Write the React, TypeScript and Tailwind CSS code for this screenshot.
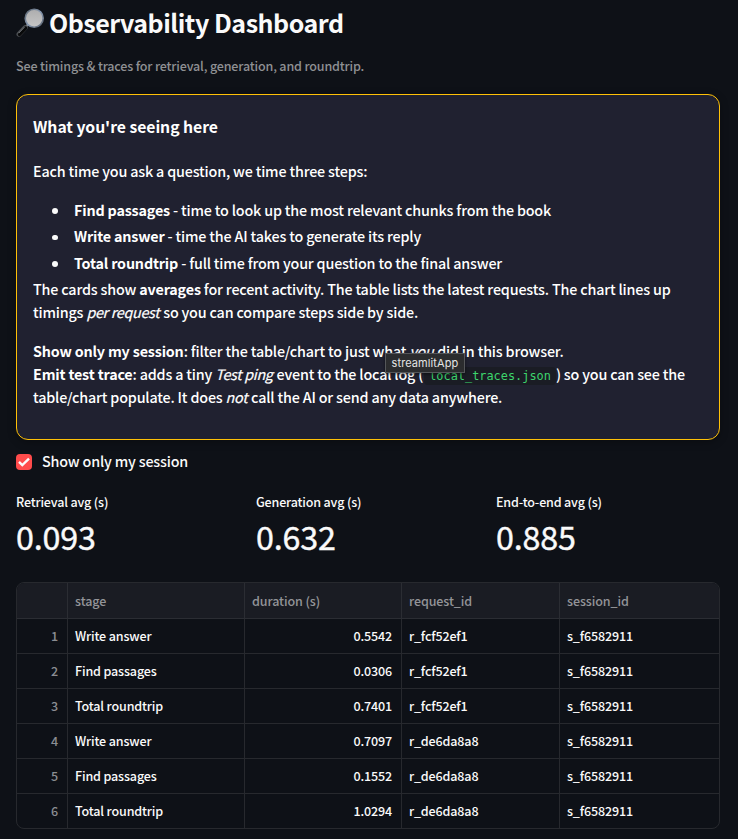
import type { ReactNode } from "react";

const metrics = [
  { label: "Retrieval avg (s)", value: "0.093" },
  { label: "Generation avg (s)", value: "0.632" },
  { label: "End-to-end avg (s)", value: "0.885" },
];

const rows = [
  ["Write answer", "0.5542", "r_fcf52ef1", "s_f6582911"],
  ["Find passages", "0.0306", "r_fcf52ef1", "s_f6582911"],
  ["Total roundtrip", "0.7401", "r_fcf52ef1", "s_f6582911"],
  ["Write answer", "0.7097", "r_de6da8a8", "s_f6582911"],
  ["Find passages", "0.1552", "r_de6da8a8", "s_f6582911"],
  ["Total roundtrip", "1.0294", "r_de6da8a8", "s_f6582911"],
];

function MagnifierIcon() {
  return (
    <svg width="30" height="30" viewBox="0 0 30 30" className="mt-[2px] shrink-0">
      <defs>
        <linearGradient id="rim" x1="0" y1="0" x2="1" y2="1">
          <stop offset="0" stopColor="#58616b" />
          <stop offset="0.5" stopColor="#8799b2" />
          <stop offset="1" stopColor="#59616c" />
        </linearGradient>
        <linearGradient id="glass" x1="0" y1="0" x2="0" y2="1">
          <stop offset="0" stopColor="#adadae" />
          <stop offset="1" stopColor="#c6c6c6" />
        </linearGradient>
      </defs>
      <path d="M12 16.5 9 19.5" stroke="#8b8f94" strokeWidth="2.2" />
      <path d="M9.3 19.6 3 26.2" stroke="#4b4e52" strokeWidth="5" strokeLinecap="round" />
      <path d="M9.6 20 3.6 26.4" stroke="#08090a" strokeWidth="3.4" strokeLinecap="round" />
      <path d="M8.2 19.4 3 24.8" stroke="#85898d" strokeWidth="0.9" strokeLinecap="round" />
      <circle cx="18.2" cy="10.2" r="9" fill="url(#glass)" stroke="url(#rim)" strokeWidth="1.6" />
    </svg>
  );
}

function Em({ children }: { children: ReactNode }) {
  return <i className="mr-[0.8px] font-normal tracking-[-0.3px] [-webkit-text-stroke:0.2px]">{children}</i>;
}

function Bullet({ title, children }: { title: string; children: ReactNode }) {
  return (
    <li className="flex h-[26.5px] items-center">
      <span className="mt-[3px] mr-[16.5px] ml-[19px] size-[5.5px] rounded-full bg-[#fafafa]" />
      <span>
        <b>{title}</b> {children}
      </span>
    </li>
  );
}

export default function App() {
  return (
    <main className="h-[839px] w-[738px] overflow-hidden bg-[#0e1117] pr-[18px] pl-4 font-['Noto_Sans_CJK_SC',sans-serif] text-[14.33px] font-medium tracking-[-0.175px] whitespace-nowrap text-[#fafafa]">
      <header className="flex h-11 items-center gap-[3px]">
        <MagnifierIcon />
        <h1 className="text-[25px] leading-[44px] font-bold tracking-[-0.48px]">Observability Dashboard</h1>
      </header>
      <p className="mt-[10px] h-10 text-[12.54px] leading-6 tracking-[-0.165px] text-[#8f9093]">
        See timings &amp; traces for retrieval, generation, and roundtrip.
      </p>

      <section className="h-[346px] rounded-xl border border-[#ffc107] bg-[#202130] px-4 pt-[20px] leading-[23px] text-white shadow-[0_2px_8px_rgba(0,0,0,0.3)]">
        <h2 className="text-[15.76px] leading-6 font-bold tracking-[-0.05px]">What you're seeing here</h2>
        <p className="mt-5">Each time you ask a question, we time three steps:</p>
        <ul className="mt-[14px]">
          <Bullet title="Find passages">- time to look up the most relevant chunks from the book</Bullet>
          <Bullet title="Write answer">- time the AI takes to generate its reply</Bullet>
          <Bullet title="Total roundtrip">- full time from your question to the final answer</Bullet>
        </ul>
        <p className="mt-[1px]">
          The cards show <b>averages</b> for recent activity. The table lists the latest requests. The chart lines up
          <br />
          timings <Em>per request</Em> so you can compare steps side by side.
        </p>
        <p className="relative mt-4">
          <b>Show only my session</b>: filter the table/chart to just what <Em>you</Em> did in this browser.
          <br />
          <b>Emit test trace</b>: adds a tiny <Em>Test ping</Em> event to the local log (
          <code className="ml-[1px] rounded bg-[#1a1c24] px-[5px] py-[2px] font-['DejaVu_Sans_Mono',monospace] text-[11.9px] leading-none tracking-normal text-[#3dd56d]">
            local_traces.json
          </code>
          ) so you can see the
          <br />
          table/chart populate. It does <Em>not</Em> call the AI or send any data anywhere.
          <span className="absolute top-[14px] left-[352px] h-[20px] w-[80px] border border-[#55575a] bg-[#2b2c2e] text-center font-[Inter,sans-serif] text-[11px] leading-[18px] font-normal tracking-[0.1px] text-[#e4e4e4] shadow-[0_1px_3px_rgba(0,0,0,0.5)]">
            streamlitApp
          </span>
        </p>
      </section>

      <label className="mt-[10px] flex h-6 items-center gap-[10px]">
        <span className="flex size-4 items-center justify-center rounded bg-[#ff4b4b]">
          <svg width="12" height="10" viewBox="0 0 12 10" fill="none">
            <path d="M1 4.8 4.3 8 11 1.6" stroke="#fafafa" strokeWidth="2.4" />
          </svg>
        </span>
        <span className="-mt-[2px]">Show only my session</span>
      </label>

      <div className="mt-4 grid grid-cols-3 gap-4">
        {metrics.map((m) => (
          <div key={m.label}>
            <div className="h-6 text-[12.54px] leading-6">{m.label}</div>
            <div className="h-[48px] text-[32.25px] leading-[44px] font-normal [-webkit-text-stroke:0.4px]">
              {m.value}
            </div>
          </div>
        ))}
      </div>

      <div className="mt-5 h-[247px] overflow-hidden rounded-lg border border-[#27292e] text-[12.54px] tracking-[-0.15px]">
        <div className="grid h-[36px] grid-cols-[51px_177px_157px_158px_1fr] border-b border-[#2b2d33] bg-[#1a1c23] leading-[36px] tracking-[-0.1px] text-[#939498]">
          {["", "stage", "duration (s)", "request_id", "session_id"].map((h, i) => (
            <div key={i} className="border-r border-[#2b2d33] pl-[7px] last:border-r-0">
              {h}
            </div>
          ))}
        </div>
        {rows.map((r, i) => (
          <div
            key={i}
            className="grid h-[35px] grid-cols-[51px_177px_157px_158px_1fr] border-b border-[#27292e] leading-[33px] last:border-b-0"
          >
            <div className="border-r border-[#27292e] pr-[9px] text-right text-[#8b8d92]">{i + 1}</div>
            <div className="border-r border-[#27292e] pl-[7px]">{r[0]}</div>
            <div className="border-r border-[#27292e] pr-[9px] text-right">{r[1]}</div>
            <div className="border-r border-[#27292e] pl-[7px]">{r[2]}</div>
            <div className="pl-[7px]">{r[3]}</div>
          </div>
        ))}
      </div>
    </main>
  );
}
